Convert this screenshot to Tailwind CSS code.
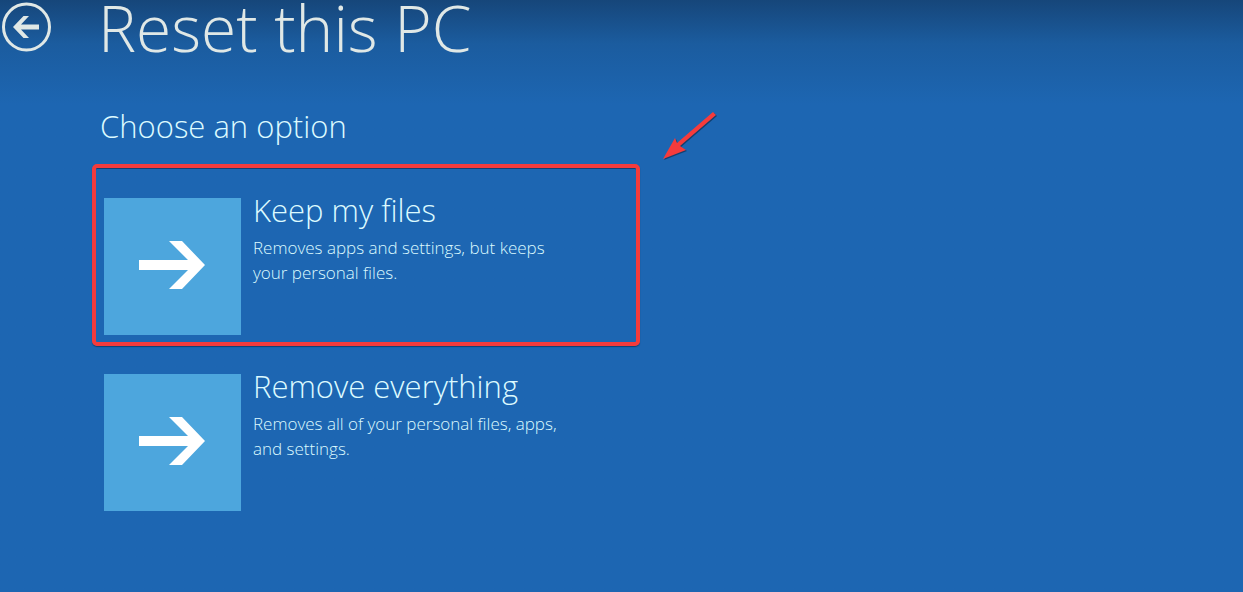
<!DOCTYPE html>
<html lang="en">
<head>
    <meta charset="UTF-8">
    <meta name="viewport" content="width=device-width, initial-scale=1.0">
    <title>Reset this PC</title>
    <script src="https://cdn.jsdelivr.net/npm/@tailwindcss/browser@4"></script>
</head>
<body class="min-h-screen bg-[#1d66b2] bg-linear-to-b from-[#16467a] from-[0px] via-[#1b5c9f] via-[44px] to-[#1d66b2] to-[104px] font-['Open_Sans','Noto_Sans',sans-serif] text-[#dcfaff]">

    <!-- Page header -->
    <header class="flex items-start text-[#e0e8e6]">
        <button type="button" aria-label="Back" class="mt-[2px] ml-[2px] mr-[46px] shrink-0">
            <svg class="block size-[50px]" viewBox="0 0 50 50" fill="none">
                <circle cx="24.5" cy="25" r="23" stroke="currentColor" stroke-width="3"/>
                <path d="M11 25 L21.5 14 H27 L19 22.5 H37 V27.5 H19 L27 36 H21.5 Z" fill="currentColor"/>
            </svg>
        </button>
        <h1 class="text-[64px] leading-14 font-light whitespace-nowrap">Reset this PC</h1>
    </header>

    <main class="pl-[92px]">
        <h2 class="mt-[50px] ml-2 text-[31px] leading-10 font-light">Choose an option</h2>

        <!-- Keep my files (highlighted) -->
        <div class="relative mt-[18px] w-[548px] rounded-[5px] border-4 border-[#f53b3c] pt-[30px] pb-[7px] pl-2 shadow-[0_1px_1px_#123f70,inset_0_1px_0_#123f70]">
            <button type="button" class="flex items-start text-left">
                <span class="mr-3 flex size-[137px] shrink-0 items-center justify-center bg-[#4da6dd] pr-[2px] pb-[3px]">
                    <svg class="block h-[48px] w-[66px]" viewBox="0 0 66 48">
                        <path d="M0 19 H49 L30 0 H43 L66 24 L43 48 H30 L49 29 H0 Z" fill="#fff"/>
                    </svg>
                </span>
                <span class="-mt-2 block">
                    <span class="block text-[31px] leading-10 font-light">Keep my files</span>
                    <span class="mt-[5px] block text-[17px] leading-[25px] font-[350]">Removes apps and settings, but keeps<br>your personal files.</span>
                </span>
            </button>

            <!-- Pointer to the highlighted option -->
            <svg class="absolute -top-[60px] left-[563px] h-[54px] w-[60px]" viewBox="0 0 60 54">
                <path d="M4 51 L16 30 L18 35 L54 4 L57 7 L21 38 L27 42 Z" fill="#123f70" transform="translate(1 1)"/>
                <path d="M4 51 L16 30 L18 35 L54 4 L57 7 L21 38 L27 42 Z" fill="#f53b3c"/>
            </svg>
        </div>

        <!-- Remove everything -->
        <button type="button" class="mt-7 ml-3 flex items-start text-left">
            <span class="mr-3 flex size-[137px] shrink-0 items-center justify-center bg-[#4da6dd] pr-[2px] pb-[3px]">
                <svg class="block h-[48px] w-[66px]" viewBox="0 0 66 48">
                    <path d="M0 19 H49 L30 0 H43 L66 24 L43 48 H30 L49 29 H0 Z" fill="#fff"/>
                </svg>
            </span>
            <span class="-mt-2 block">
                <span class="block text-[31px] leading-10 font-light">Remove everything</span>
                <span class="mt-[5px] block text-[17px] leading-[25px] font-[350]">Removes all of your personal files, apps,<br>and settings.</span>
            </span>
        </button>
    </main>

</body>
</html>
